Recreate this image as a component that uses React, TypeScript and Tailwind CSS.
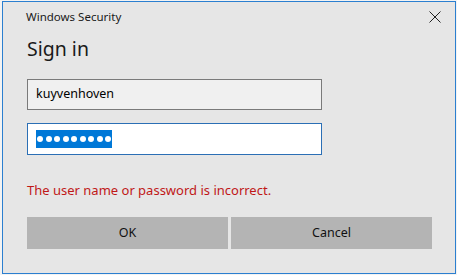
import React from "react";

const font = { fontFamily: '"Noto Sans", "Open Sans", sans-serif' };

export default function App() {
  return (
    <div className="h-[275px] w-[457px] bg-[#f3f3f3] pl-[2px] pr-[1px] pt-[1px] pb-[1px]" style={font}>
      <div className="flex h-full w-full flex-col border border-[#2b7fd0] bg-[#e6e6e6] text-[#000]">
        {/* title bar */}
        <div className="flex h-[30px] items-center justify-between pl-[23px] pr-[14px]">
          <span className="text-[11.5px] leading-none text-[#1a1a1a]">Windows Security</span>
          <svg width="12" height="12" viewBox="0 0 12 12" className="text-[#222]">
            <path d="M0.5 0.5 L11.5 11.5 M11.5 0.5 L0.5 11.5" stroke="currentColor" strokeWidth="1" />
          </svg>
        </div>

        <div className="flex flex-col pl-[24px] pr-[23px]">
          <h1 className="mt-[3px] text-[19.5px] leading-[28px] text-[#1a1a1a]">Sign in</h1>

          <div className="mt-[16px] flex h-[31px] w-[295px] items-center border border-[#7a7a7a] bg-[#f0f0f0] px-[8px] text-[12.5px]">
            kuyvenhoven
          </div>

          <div className="mt-[13px] flex h-[32px] w-[295px] items-center border border-[#2b6fb5] bg-white px-[8px]">
            <span className="flex h-[18px] items-center gap-[2.5px] bg-[#0078d7] px-[1px]">
              {Array.from({ length: 9 }).map((_, i) => (
                <span key={i} className="h-[6px] w-[6px] rounded-full bg-white" />
              ))}
            </span>
          </div>

          <p className="mt-[26px] text-[13px] leading-[19px] text-[#c01818]">
            The user name or password is incorrect.
          </p>

          <div className="mt-[17px] flex gap-[3px]">
            <button className="h-[32px] w-[201px] bg-[#b4b4b4] text-[12.5px] text-[#111]">OK</button>
            <button className="h-[32px] w-[201px] bg-[#b4b4b4] text-[12.5px] text-[#111]">Cancel</button>
          </div>
        </div>
      </div>
    </div>
  );
}
